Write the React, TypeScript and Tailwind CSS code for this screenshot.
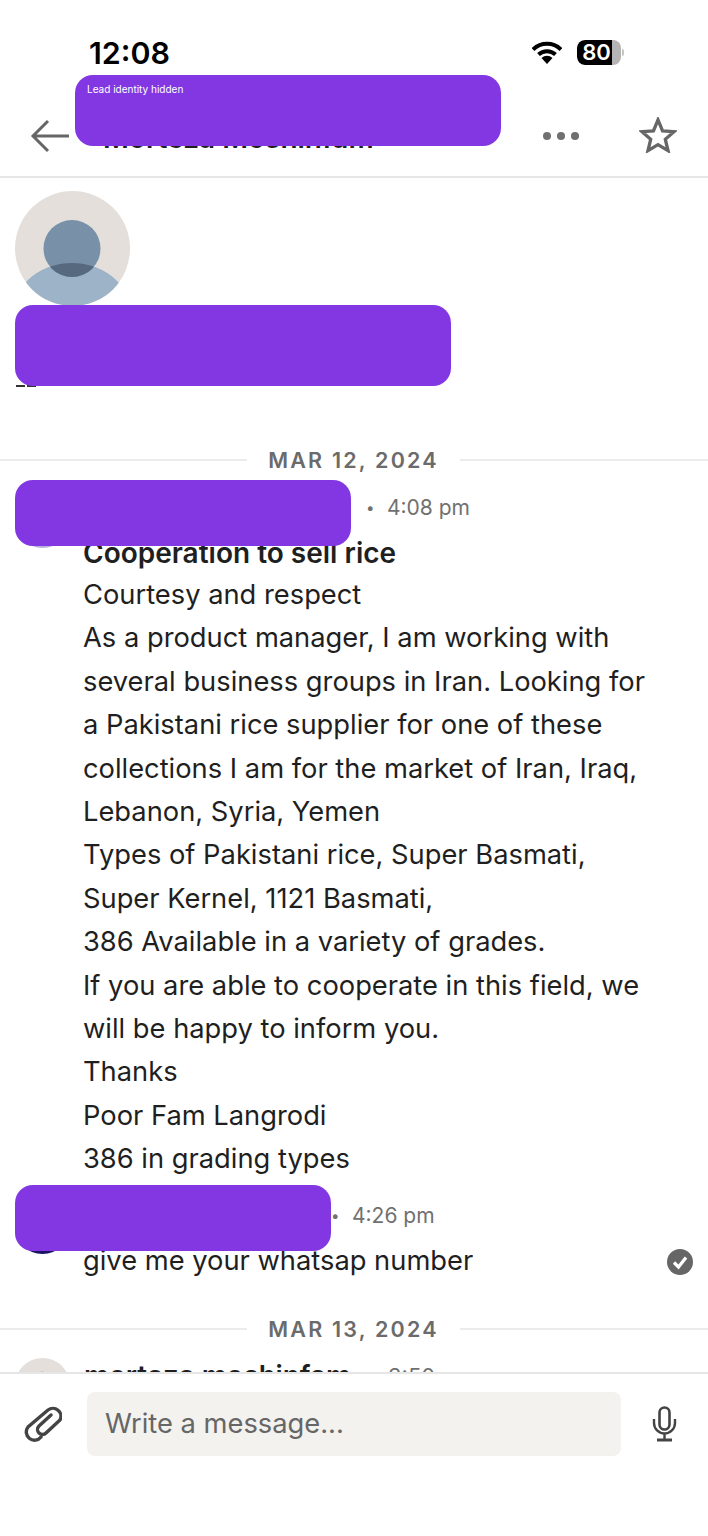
import React, { useId } from 'react';

const bodyLines = [
  'Courtesy and respect',
  'As a product manager, I am working with',
  'several business groups in Iran. Looking for',
  'a Pakistani rice supplier for one of these',
  'collections I am for the market of Iran, Iraq,',
  'Lebanon, Syria, Yemen',
  'Types of Pakistani rice, Super Basmati,',
  'Super Kernel, 1121 Basmati,',
  '386 Available in a variety of grades.',
  'If you are able to cooperate in this field, we',
  'will be happy to inform you.',
  'Thanks',
  'Poor Fam Langrodi',
  '386 in grading types',
];

function Avatar({ size }: { size: number }) {
  const id = useId();
  return (
    <svg width={size} height={size} viewBox="0 0 115 115" className="block shrink-0">
      <defs>
        <clipPath id={`${id}-round`}>
          <circle cx="57.5" cy="57.5" r="57.5" />
        </clipPath>
        <clipPath id={`${id}-head`}>
          <circle cx="57" cy="57.5" r="28.5" />
        </clipPath>
      </defs>
      <g clipPath={`url(#${id}-round)`}>
        <rect width="115" height="115" fill="#e4dfda" />
        <ellipse cx="57" cy="129" rx="62" ry="57" fill="#9db3c8" />
        <circle cx="57" cy="57.5" r="28.5" fill="#7890a8" />
        <ellipse cx="57" cy="129" rx="62" ry="57" fill="#56697f" clipPath={`url(#${id}-head)`} />
      </g>
    </svg>
  );
}

function DateRow({ label }: { label: string }) {
  return (
    <div className="flex items-center">
      <div className="h-[2px] w-[247px] bg-[#ebebe9]" />
      <div className="w-[213px] text-center text-[21.5px] font-semibold tracking-[2.2px] leading-[28px] text-[#6b6b6b]">
        {label}
      </div>
      <div className="h-[2px] flex-1 bg-[#ebebe9]" />
    </div>
  );
}

function Redacted({ className, children }: { className: string; children?: React.ReactNode }) {
  return <div className={`absolute rounded-[18px] bg-[#8237e2] ${className}`}>{children}</div>;
}

function Message({ avatar, time, timeClass, children, check }: {
  avatar: string;
  time: string;
  timeClass: string;
  children: React.ReactNode;
  check?: boolean;
}) {
  return (
    <div className="flex pl-[15px] pr-[15px]">
      <div className={`h-[55px] w-[55px] shrink-0 rounded-full ${avatar}`} />
      <div className="ml-[13px] flex-1">
        <div className={`flex h-[40px] items-start text-[21px] leading-[28px] text-[#707070] ${timeClass}`}>
          <span className="w-[21px] text-[15px]">•</span>
          <span>{time}</span>
        </div>
        <div className="flex items-center justify-between text-[27.3px] leading-[43.4px]">
          <div className="flex-1">{children}</div>
          {check && (
            <svg width="26" height="26" viewBox="0 0 26 26" className="mt-[3px]">
              <circle cx="13" cy="13" r="13" fill="#666666" />
              <path d="M7 13.5 L11.5 18 L19 8.5" fill="none" stroke="#fff" strokeWidth="3.2" />
            </svg>
          )}
        </div>
      </div>
    </div>
  );
}

export default function App() {
  return (
    <div className="relative h-[1536px] w-[708px] overflow-hidden bg-white font-['Inter','Liberation_Sans',sans-serif] text-[#1f1f1f]">
      {/* status bar */}
      <div className="flex h-[106px] items-start justify-between pl-[89px] pr-[84px] pt-[34px]">
        <div className="text-[30.4px] font-semibold leading-[38px] text-black">12:08</div>
        <div className="flex items-center gap-[15px] pt-[6px]">
          <svg width="30" height="24" viewBox="0 0 30 24">
            <path d="M1 8.5 A20 20 0 0 1 29 8.5" fill="none" stroke="#000" strokeWidth="4" />
            <path d="M6.5 13.5 A12.5 12.5 0 0 1 23.5 13.5" fill="none" stroke="#000" strokeWidth="4" />
            <path d="M15 23 L9.5 17 A8 8 0 0 1 20.5 17 Z" fill="#000" />
          </svg>
          <div className="flex items-center">
            <div className="flex h-[25px] w-[44px] overflow-hidden rounded-[8px] bg-[#b5b5b5]">
              <div className="w-[35px] rounded-l-[8px] bg-black pl-[4px] text-center text-[22px] font-semibold leading-[25px] text-white">
                80
              </div>
            </div>
            <div className="ml-[1px] h-[7px] w-[2px] rounded-r-sm bg-[#c4c4c4]" />
          </div>
        </div>
      </div>

      {/* header */}
      <div className="flex h-[72px] items-start border-b-2 border-[#e6e6e6] pl-[30px] pr-[31px]">
        <svg width="40" height="34" viewBox="0 0 40 34" className="mt-[13px]" fill="none" stroke="#666" strokeWidth="3">
          <path d="M39 17 H3 M18 2 L3 17 L18 32" />
        </svg>
        <div className="ml-[33px] mt-[14px] flex-1 text-[28px] font-semibold leading-[36px]">Morteza Moshinfam</div>
        <div className="mt-[26px] flex gap-[6px]">
          <div className="h-[8px] w-[8px] rounded-full bg-[#707070]" />
          <div className="h-[8px] w-[8px] rounded-full bg-[#707070]" />
          <div className="h-[8px] w-[8px] rounded-full bg-[#707070]" />
        </div>
        <svg width="38" height="36" viewBox="0 0 40 38" className="ml-[60px] mt-[11px]" fill="none" stroke="#666" strokeWidth="3.5">
          <path d="M20 3 L24.8 14.6 L37 15.5 L27.7 23.6 L30.6 35.5 L20 29.2 L9.4 35.5 L12.3 23.6 L3 15.5 L15.2 14.6 Z" />
        </svg>
      </div>

      {/* profile */}
      <div className="h-[209px] pl-[15px] pt-[13px]">
        <Avatar size={115} />
        <div className="ml-[1px] mt-[79px] flex gap-[2px]">
          <div className="h-[2px] w-[9px] bg-[#333333]" />
          <div className="h-[2px] w-[9px] bg-[#333333]" />
        </div>
      </div>

      {/* messages */}
      <div className="pt-[59px]">
        <DateRow label="MAR 12, 2024" />
      </div>

      <div className="pt-[19px]">
        <Message avatar="bg-[#b8aee0]" time="4:08 pm" timeClass="pl-[283px] pt-[1px]">
          <div className="text-[28px] font-semibold leading-[40px]">Cooperation to sell rice</div>
          {bodyLines.map(line => (
            <div key={line}>{line}</div>
          ))}
        </Message>
      </div>

      <div className="mt-[18px]">
        <Message avatar="bg-[#1b1464]" time="4:26 pm" timeClass="pl-[248px] pt-[3px]" check>
          give me your whatsap number
        </Message>
      </div>

      <div className="pt-[33px]">
        <DateRow label="MAR 13, 2024" />
      </div>

      <div className="flex items-start pl-[15px] pt-[15px]">
        <Avatar size={55} />
        <div className="ml-[14px] w-[304px] pt-[1px] text-[27.7px] font-semibold leading-[32px]">mortaza moshinfam</div>
        <div className="pt-[2px] text-[22px] leading-[32px] text-[#707070]">3:50</div>
      </div>

      {/* composer */}
      <div className="absolute bottom-0 left-0 right-0 flex h-[164px] items-start border-t-2 border-[#e6e6e6] bg-white pt-[18px]">
        <svg width="40" height="40" viewBox="12 12 40 40" className="ml-[22px] mr-[25px] mt-[10px]" fill="none" stroke="#444" strokeWidth="3.4" strokeLinecap="round">
          <path d="M31 47 A8 8 0 0 1 18 37 L38 20 A8 8 0 0 1 50 30 L36 43 A4.5 4.5 0 0 1 29 36 L41 25" />
        </svg>
        <div className="flex h-[64px] w-[534px] items-center rounded-[8px] bg-[#f3f2ef] pl-[18px] text-[27.3px] text-[#666666]">
          Write a message...
        </div>
        <svg width="26" height="38" viewBox="12 9 26 38" className="ml-[31px] mt-[12px]" fill="none" stroke="#444">
          <rect x="19.5" y="12.5" width="10" height="22" rx="5" strokeWidth="2.6" />
          <path d="M14 24 V28 A10.5 10.5 0 0 0 35 28 V24 M24.5 39 V45" strokeWidth="2.4" />
          <path d="M17 45 H32" strokeWidth="3" />
        </svg>
      </div>

      {/* redactions */}
      <Redacted className="left-[75px] top-[75px] h-[71px] w-[426px] pl-[12px] pt-[8px] text-[10px] leading-[12px] text-white">
        Lead identity hidden
      </Redacted>
      <Redacted className="left-[15px] top-[305px] h-[81px] w-[436px]" />
      <Redacted className="left-[15px] top-[480px] h-[66px] w-[336px]" />
      <Redacted className="left-[15px] top-[1185px] h-[66px] w-[316px]" />
    </div>
  );
}
